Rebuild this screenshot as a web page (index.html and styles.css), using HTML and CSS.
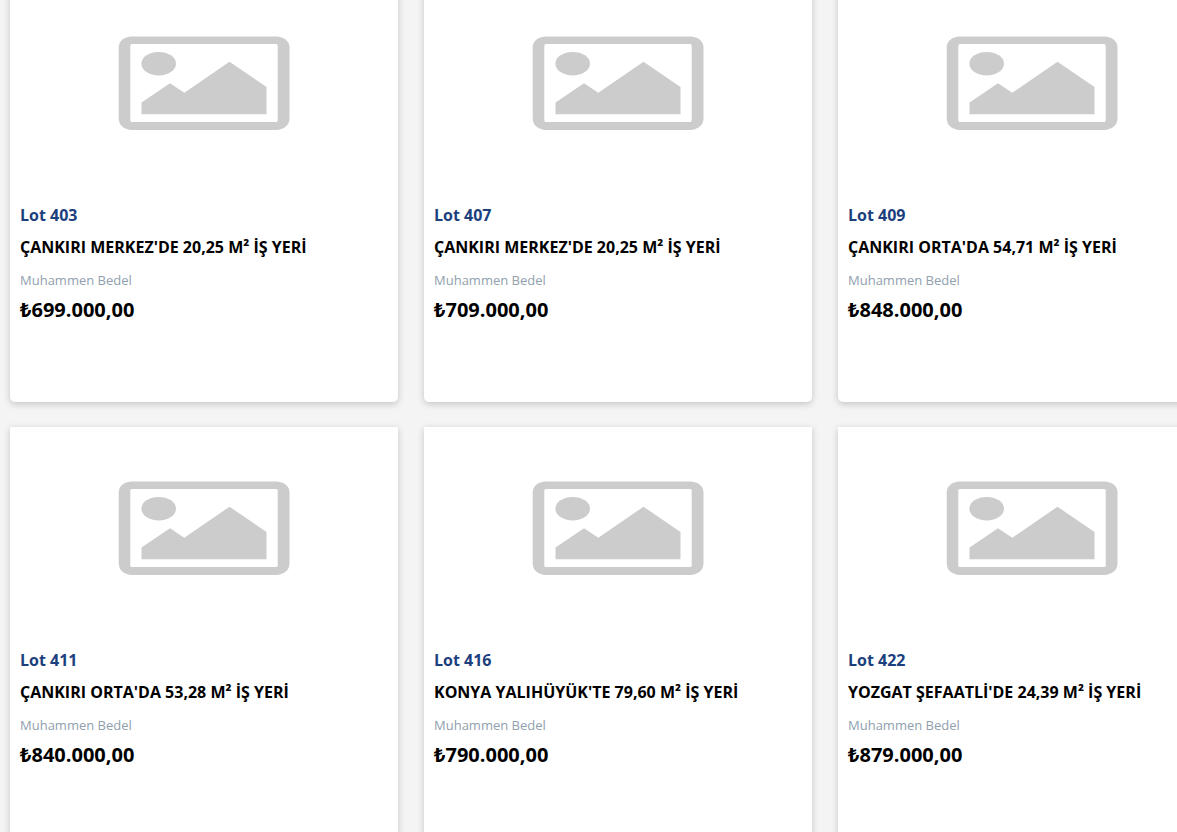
FILE: index.html
```html
<!DOCTYPE html>
<html lang="tr">
<head>
    <meta charset="UTF-8" />
    <meta name="viewport" content="width=device-width, initial-scale=1.0" />
    <title>İş Yeri İlanları</title>
    <link rel="stylesheet" href="styles.css">
</head>
<body>
    <svg class="symbols" aria-hidden="true">
        <symbol id="noImage" viewBox="0 0 172 94">
            <path fill-rule="evenodd" d="M13 0.500H159Q171.500 2 171.500 12V82Q171.500 92 159 94H13Q0.700 92 0.700 82V12Q0.700 2 13 0.500ZM14 8Q12.300 8 12.300 9.500V84.500Q12.300 86 14 86H158Q159.700 86 159.700 84.500V9.500Q159.700 8 158 8Z" />
            <ellipse cx="40.700" cy="27.700" rx="17.300" ry="11.800" />
            <path d="M23.500 78.300V66.500L52 47.200L66.300 56.700L111.500 25.700L148.500 51V78.300Z" />
        </symbol>
    </svg>

    <main class="lots">
        <article class="lot">
            <div class="lot-image"><svg><use href="#noImage" /></svg></div>
            <div class="lot-body">
                <p class="lot-number">Lot 403</p>
                <h2 class="lot-title">ÇANKIRI MERKEZ'DE 20,25 M² İŞ YERİ</h2>
                <p class="lot-label">Muhammen Bedel</p>
                <p class="lot-price">₺699.000,00</p>
            </div>
        </article>
        <article class="lot">
            <div class="lot-image"><svg><use href="#noImage" /></svg></div>
            <div class="lot-body">
                <p class="lot-number">Lot 407</p>
                <h2 class="lot-title">ÇANKIRI MERKEZ'DE 20,25 M² İŞ YERİ</h2>
                <p class="lot-label">Muhammen Bedel</p>
                <p class="lot-price">₺709.000,00</p>
            </div>
        </article>
        <article class="lot">
            <div class="lot-image"><svg><use href="#noImage" /></svg></div>
            <div class="lot-body">
                <p class="lot-number">Lot 409</p>
                <h2 class="lot-title">ÇANKIRI ORTA'DA 54,71 M² İŞ YERİ</h2>
                <p class="lot-label">Muhammen Bedel</p>
                <p class="lot-price">₺848.000,00</p>
            </div>
        </article>
        <article class="lot">
            <div class="lot-image"><svg><use href="#noImage" /></svg></div>
            <div class="lot-body">
                <p class="lot-number">Lot 411</p>
                <h2 class="lot-title">ÇANKIRI ORTA'DA 53,28 M² İŞ YERİ</h2>
                <p class="lot-label">Muhammen Bedel</p>
                <p class="lot-price">₺840.000,00</p>
            </div>
        </article>
        <article class="lot">
            <div class="lot-image"><svg><use href="#noImage" /></svg></div>
            <div class="lot-body">
                <p class="lot-number">Lot 416</p>
                <h2 class="lot-title">KONYA YALIHÜYÜK'TE 79,60 M² İŞ YERİ</h2>
                <p class="lot-label">Muhammen Bedel</p>
                <p class="lot-price">₺790.000,00</p>
            </div>
        </article>
        <article class="lot">
            <div class="lot-image"><svg><use href="#noImage" /></svg></div>
            <div class="lot-body">
                <p class="lot-number">Lot 422</p>
                <h2 class="lot-title">YOZGAT ŞEFAATLİ'DE 24,39 M² İŞ YERİ</h2>
                <p class="lot-label">Muhammen Bedel</p>
                <p class="lot-price">₺879.000,00</p>
            </div>
        </article>
    </main>
</body>
</html>
```

FILE: styles.css
```css
body {
  margin: 0;
  height: 100vh;
  overflow: hidden;
  font-family: "Open Sans", "Noto Sans", sans-serif;
  background-color: #f4f4f4;
  color: #000;
}

.symbols {
  display: none;
}

.lots {
  display: grid;
  grid-template-columns: repeat(3, minmax(388px, 1fr));
  gap: 25px 26px;
  padding: 0 10px;
  margin-top: -18px;
}

.lot {
  background-color: #fff;
  border-radius: 0 0 5px 5px;
  box-shadow: 0 2px 7px rgba(0, 0, 0, 0.2);
}

.lot-image {
  display: flex;
  align-items: center;
  justify-content: center;
  height: 202px;
}

.lot-image svg {
  width: 172px;
  height: 94px;
  fill: #ccc;
}

.lot-body {
  padding: 19px 10px 77px;
}

.lot-body p,
.lot-title {
  margin: 0;
}

.lot-body .lot-number {
  margin-bottom: 8px;
  font-size: 16px;
  line-height: 24px;
  font-weight: 700;
  color: #1c3f7e;
}

.lot-title {
  margin-bottom: 9px;
  font-size: 16px;
  line-height: 24px;
  font-weight: 700;
}

.lot-label {
  font-size: 13px;
  line-height: 24px;
  color: #90a0ae;
}

.lot-price {
  padding-top: 3px;
  font-size: 20px;
  line-height: 30px;
  font-weight: 700;
}
```
